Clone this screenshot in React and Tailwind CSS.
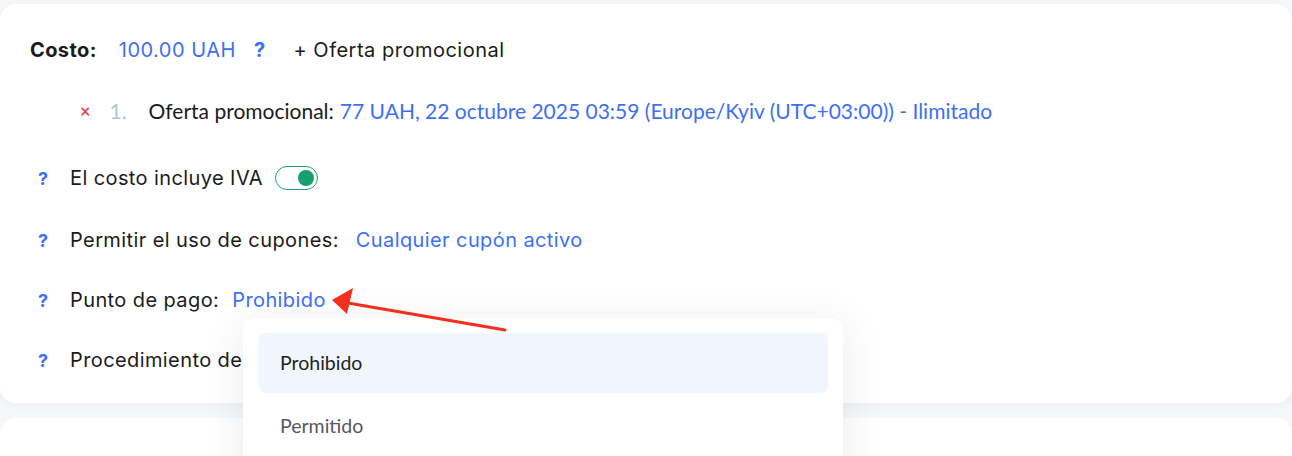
import React from 'react';

const inter = { fontFamily: 'Inter, "Noto Sans", sans-serif' };
const lato = { fontFamily: 'Lato, "Noto Sans", sans-serif' };

function Help() {
  return <span className="w-[32px] shrink-0 text-[18px] font-bold text-[#3d6ff5] pl-[8px]">?</span>;
}

function Toggle() {
  return (
    <span className="ml-[12px] inline-flex items-center justify-end w-[43px] h-[24px] rounded-full border border-[#1f9f70] bg-white pr-[3px]">
      <span className="w-[16px] h-[16px] rounded-full bg-[#16a06e]" />
    </span>
  );
}

export default function App() {
  return (
    <div className="relative w-full h-[456px] overflow-hidden bg-[#f6f7f9] text-[#1b1b1b]" style={inter}>
      {/* main card */}
      <div className="mt-[4px] bg-white rounded-2xl shadow-[0_2px_10px_rgba(30,40,70,0.04)] pl-[30px] pt-[32px] pb-[29px] text-[20px] tracking-[0.4px]">
        <div className="h-[28px] flex items-center">
          <span className="font-bold">Costo:</span>
          <span className="ml-[22px] text-[#3d6ff5] tracking-[0.5px]">100.00 UAH</span>
          <span className="ml-[18px] font-bold text-[#3d6ff5]">?</span>
          <span className="ml-[28px] tracking-[0.5px]">+ Oferta promocional</span>
        </div>
        <div className="h-[28px] mt-[33px] flex items-center pl-[50px] tracking-normal" style={lato}>
          <span className="text-[#e5484d] font-bold text-[18px]">×</span>
          <span className="ml-[19px] text-[#b7c3d6] text-[21px]">1.</span>
          <span className="ml-[22px] text-[21px]">Oferta promocional:</span>
          <span className="ml-[6px] text-[#3d6ff5] text-[21px]">77 UAH, 22 octubre 2025 03:59 (Europe/Kyiv (UTC+03:00)) - Ilimitado</span>
        </div>
        <div className="h-[28px] mt-[39px] flex items-center">
          <Help />
          <span className="ml-[8px]">El costo incluye IVA</span>
          <Toggle />
        </div>
        <div className="h-[28px] mt-[34px] flex items-center">
          <Help />
          <span className="ml-[8px]">Permitir el uso de cupones:</span>
          <span className="ml-[17px] text-[#3d6ff5]">Cualquier cupón activo</span>
        </div>
        <div className="h-[28px] mt-[32px] flex items-center">
          <Help />
          <span className="ml-[8px]">Punto de pago:</span>
          <span className="ml-[13px] text-[#3d6ff5]">Prohibido</span>
        </div>
        <div className="h-[28px] mt-[32px] flex items-center">
          <Help />
          <span className="ml-[8px]">Procedimiento de pago</span>
        </div>
      </div>

      {/* next card */}
      <div className="mt-[15px] h-[60px] bg-white rounded-2xl" />

      {/* dropdown */}
      <div className="absolute left-[243px] top-[318px] w-[600px] h-[160px] bg-white rounded-xl shadow-[0_6px_40px_rgba(40,55,90,0.10)] p-[15px]" style={lato}>
        <div className="h-[60px] rounded-lg bg-[#f0f5fe] flex items-center px-[22px] text-[19.5px] text-[#1f1f1f]">Prohibido</div>
        <div className="h-[60px] mt-[3px] flex items-center px-[22px] text-[19.5px] text-[#545860]">Permitido</div>
      </div>

      {/* arrow */}
      <svg className="absolute left-0 top-0 pointer-events-none" width="1292" height="456">
        <line x1="505" y1="330" x2="348" y2="303" stroke="#f2301b" strokeWidth="3" strokeLinecap="round" />
        <polygon points="332,300 353,288 347,314" fill="#f2301b" />
      </svg>
    </div>
  );
}
